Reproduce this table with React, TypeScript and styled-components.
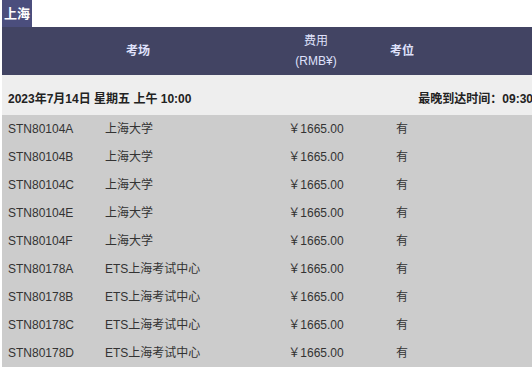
import React from "react";
import styled, { createGlobalStyle } from "styled-components";

const Global = createGlobalStyle`
  html, body { margin: 0; padding: 0; background: #ffffff; overflow: hidden; }
  body { font-family: "Liberation Sans", Arial, "Noto Sans CJK SC", sans-serif; font-size: 12px; color: #333333; }
`;

const Page = styled.div`
  padding-left: 2px;
  width: 560px;
`;

const CityTag = styled.div`
  display: inline-block;
  background: #4b4e7d;
  color: #ffffff;
  font-weight: bold;
  font-size: 13px;
  line-height: 27px;
  height: 27px;
  padding: 0 2px;
  vertical-align: top;
`;

const Cols = "97px 175px 84px 88px 1fr";

const HeaderBar = styled.div`
  display: grid;
  grid-template-columns: ${Cols};
  height: 48px;
  background: #424463;
  color: #dfe1fb;
  align-items: center;
`;

const HeadCell = styled.div<{ $span?: number; $bold?: boolean }>`
  grid-column: span ${(p) => p.$span ?? 1};
  text-align: center;
  font-weight: ${(p) => (p.$bold ? "bold" : "normal")};
  line-height: 20px;
`;

const DateRow = styled.div`
  display: flex;
  justify-content: space-between;
  background: #eeeeee;
  height: 40px;
  box-sizing: border-box;
  padding: 17px 29px 9px 6px;
  line-height: 14px;
  font-weight: bold;
  color: #222222;
`;

const Row = styled.div`
  display: grid;
  grid-template-columns: ${Cols};
  height: 28px;
  background: #cccccc;
  align-items: center;
  line-height: 14px;
`;

const Cell = styled.div<{ $center?: boolean }>`
  padding-left: ${(p) => (p.$center ? "0" : "6px")};
  text-align: ${(p) => (p.$center ? "center" : "left")};
  white-space: nowrap;
`;

const rows = [
  ["STN80104A", "上海大学"],
  ["STN80104B", "上海大学"],
  ["STN80104C", "上海大学"],
  ["STN80104E", "上海大学"],
  ["STN80104F", "上海大学"],
  ["STN80178A", "ETS上海考试中心"],
  ["STN80178B", "ETS上海考试中心"],
  ["STN80178C", "ETS上海考试中心"],
  ["STN80178D", "ETS上海考试中心"],
];

export default function App() {
  return (
    <>
      <Global />
      <Page>
        <CityTag>上海</CityTag>
        <HeaderBar>
          <HeadCell $span={2} $bold>考场</HeadCell>
          <HeadCell>
            费用
            <br />
            (RMB¥)
          </HeadCell>
          <HeadCell $bold>考位</HeadCell>
          <HeadCell />
        </HeaderBar>
        <DateRow>
          <span>2023年7月14日 星期五 上午 10:00</span>
          <span>最晚到达时间：09:30</span>
        </DateRow>
        {rows.map(([code, name]) => (
          <Row key={code}>
            <Cell>{code}</Cell>
            <Cell>{name}</Cell>
            <Cell $center>￥1665.00</Cell>
            <Cell $center>有</Cell>
            <Cell />
          </Row>
        ))}
      </Page>
    </>
  );
}
